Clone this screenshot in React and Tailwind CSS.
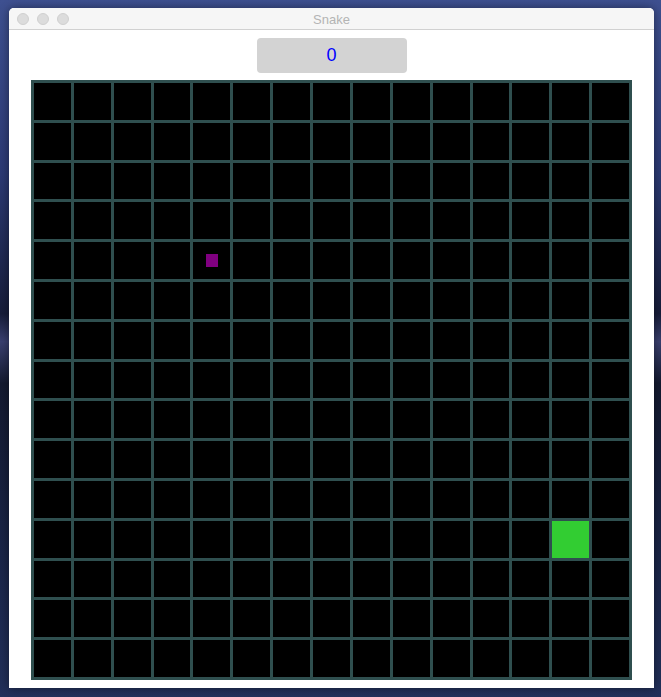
import React from 'react';

const SIZE = 15;
const snake = [{ x: 13, y: 11 }];
const food = { x: 4, y: 4 };

// 单个格子
const Cell = ({ x, y }) => {
  const isSnake = snake.some((s) => s.x === x && s.y === y);
  const isFood = food.x === x && food.y === y;
  if (isSnake) return <div className="bg-[#32cd32]" />;
  return (
    <div className="bg-black flex items-center justify-center">
      {isFood && <div className="w-[12px] h-[13px] bg-[#800080]" />}
    </div>
  );
};

// 标题栏
const TitleBar = ({ title }) => (
  <div className="relative h-[22px] bg-[#f6f6f6] border-b border-[#d1d1d1] rounded-t-[5px] flex items-center justify-center">
    <div className="absolute left-[8px] top-[5px] flex gap-[8px]">
      <span className="w-[12px] h-[12px] rounded-full bg-[#dcdcdc] border border-[#d0d0d0]" />
      <span className="w-[12px] h-[12px] rounded-full bg-[#dcdcdc] border border-[#d0d0d0]" />
      <span className="w-[12px] h-[12px] rounded-full bg-[#dcdcdc] border border-[#d0d0d0]" />
    </div>
    <span className="text-[13px] text-[#b4b4b4] leading-none pt-[1px]">{title}</span>
  </div>
);

export default function App() {
  const cells = [];
  for (let y = 0; y < SIZE; y++) {
    for (let x = 0; x < SIZE; x++) {
      cells.push(<Cell key={`${x}-${y}`} x={x} y={y} />);
    }
  }

  return (
    <div
      className="w-[661px] h-[697px] overflow-hidden pt-[8px] pl-[9px] bg-[linear-gradient(180deg,#3e5090_0%,#2c3a74_25%,#171d3a_45%,#3a4070_49%,#141a30_55%,#1a2548_80%,#22305a_100%)]"
      style={{ fontFamily: '"Liberation Sans", Arial, sans-serif' }}
    >
      <div className="w-[645px] h-[680px] bg-white rounded-t-[5px] shadow-[0_0_10px_rgba(0,0,0,0.45)] flex flex-col">
        <TitleBar title="Snake" />
        <div className="flex flex-col items-center pt-[8px]">
          <div className="w-[150px] h-[35px] rounded-[4px] bg-[#d3d3d3] flex items-center justify-center text-[18px] text-[#0000ff]">
            0
          </div>
          <div className="mt-[7px] w-[601px] h-[600px] bg-[#2f4f4f] p-[3px] gap-[3px] grid grid-cols-15 grid-rows-15">
            {cells}
          </div>
        </div>
      </div>
    </div>
  );
}
